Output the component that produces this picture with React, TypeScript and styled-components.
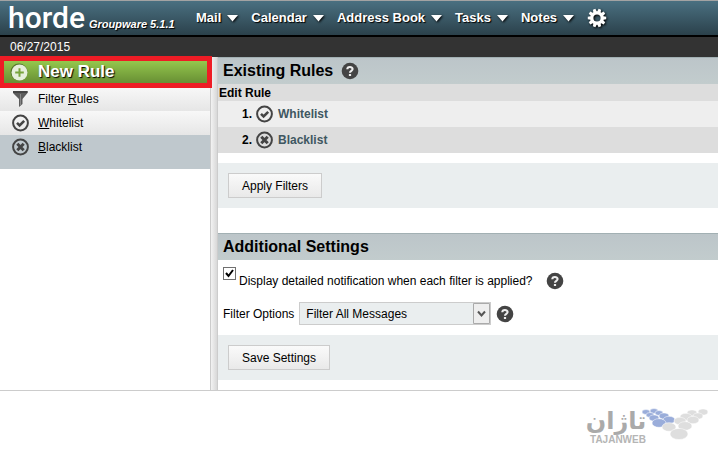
import React from "react";
import styled, { createGlobalStyle } from "styled-components";

const Global = createGlobalStyle`
  * { box-sizing: border-box; }
  body { margin: 0; background: #fff; color: #000; font: 12px/16px "Liberation Sans", Arial, sans-serif; }
  button, select, input { font: inherit; color: inherit; margin: 0; }
`;

const TopBar = styled.header`
  display: flex;
  align-items: center;
  height: 37px;
  border-top: 1px solid #a3a3a3;
  border-bottom: 2px solid #000;
  background: linear-gradient(#4a7081, #2b414b);
  color: #fff;
  text-shadow: 1px 1px 1px #000;
`;

const Brand = styled.div`
  display: flex;
  align-items: baseline;
  width: 196px;
  padding-left: 8px;
  flex: none;
`;

const BrandName = styled.span`
  width: 81px;
  font: 500 30px/34px Roboto, sans-serif;
  text-shadow: none;
`;

const BrandVersion = styled.span`
  font-size: 11px;
  font-weight: bold;
  font-style: italic;
  white-space: nowrap;
`;

const Nav = styled.nav`
  display: flex;
  align-items: center;
  gap: 13px;
`;

const NavItem = styled.button`
  display: flex;
  align-items: center;
  gap: 6px;
  padding: 0;
  border: 0;
  background: none;
  font-size: 13px;
  font-weight: bold;
  text-shadow: inherit;
  white-space: nowrap;
  svg { filter: drop-shadow(1px 1px 1px #000); }
`;

const DateBar = styled.div`
  height: 20px;
  padding: 2px 10px;
  background: #333;
  color: #fff;
`;

const Page = styled.div`
  display: flex;
  border-bottom: 1px solid #ccc;
`;

const Sidebar = styled.aside`
  width: 211px;
  flex: none;
  border-right: 1px solid #ccc;
`;

const NewRule = styled.button`
  display: flex;
  align-items: center;
  gap: 10px;
  width: 212px;
  height: 32px;
  margin: -1px 0;
  padding: 0 6px;
  border: 5px solid #ee1c25;
  border-left-width: 4px;
  background: linear-gradient(#94c74d, #688f34) padding-box;
  color: #fff;
  font-size: 17px;
  line-height: 20px;
  font-weight: bold;
  text-shadow: 1px 1px 1px #000;
  position: relative;
`;

const FilterLink = styled.a<{ $active?: boolean }>`
  display: flex;
  align-items: center;
  gap: 8px;
  height: ${(p) => (p.$active ? 34 : 24)}px;
  padding: 0 0 ${(p) => (p.$active ? 10 : 0)}px 12px;
  background: ${(p) => (p.$active ? "#bfc8cd" : "linear-gradient(#f8f8f8, #e6e6e6)")};
  color: #000;
  text-decoration: none;
`;

const Splitter = styled.div`
  width: 7px;
  flex: none;
  border-right: 1px solid #ccc;
  background: linear-gradient(90deg, #f2f2f2, #d8d8d8);
`;

const Main = styled.main`
  flex: 1;
  min-width: 0;
  padding-bottom: 10px;
`;

const Heading = styled.h1`
  display: flex;
  align-items: center;
  gap: 8px;
  height: 27px;
  margin: 0;
  padding: 0 5px;
  border-top: 1px solid #a2b0b3;
  background: linear-gradient(#bcc5c9, #c2cccd);
  font-size: 16px;
  line-height: 20px;
`;

const RuleTable = styled.table`
  width: 100%;
  border-collapse: collapse;
  th, td { padding: 0; text-align: left; font-weight: bold; }
  th { height: 17px; padding-left: 1px; background: #ddd; }
  td { height: 26px; }
  tbody tr { background: #eee; }
  tbody tr:nth-child(even) { background: #ddd; }
`;

const Rule = styled.div`
  display: flex;
  align-items: center;
  gap: 4px;
  padding-left: 24px;
  a { color: #3f5761; text-decoration: none; }
`;

const Actions = styled.div`
  padding: 10px;
  margin-top: 10px;
  background: #eaeeef;
`;

const ActionButton = styled.button`
  display: block;
  height: 25px;
  padding: 0 13px;
  border: 1px solid #ccc;
  background: linear-gradient(#fafafa, #e9e9e9);
`;

const Gap = styled.div`
  height: 25px;
`;

const CheckRow = styled.div`
  display: flex;
  align-items: center;
  gap: 3px;
  height: 28px;
  margin: 7px 0;
  padding: 0 5px;
  label { padding-right: 10px; }
`;

const Checkbox = styled.input`
  appearance: none;
  width: 13px;
  height: 13px;
  margin: 0;
  border: 1px solid #707070;
  align-self: flex-start;
  background: #fff;
  &:checked {
    background: url("data:image/svg+xml,%3Csvg xmlns='http://www.w3.org/2000/svg' viewBox='0 0 11 11'%3E%3Cpath d='M2 5l2.5 3L9 2' fill='none' stroke='%23000' stroke-width='2'/%3E%3C/svg%3E");
  }
`;

const SelectRow = styled.div`
  display: flex;
  align-items: center;
  gap: 5px;
  padding: 0 5px;
`;

const SelectBox = styled.div`
  display: grid;
  align-items: center;
  width: 192px;
  select, svg { grid-area: 1 / 1; }
  svg { justify-self: end; pointer-events: none; }
`;

const Select = styled.select`
  appearance: none;
  width: 100%;
  height: 23px;
  padding: 0 24px 0 6px;
  border: 1px solid #ccc;
  border-radius: 0;
  background: #eaeeef;
`;

const Footer = styled.footer`
  display: flex;
  justify-content: flex-end;
  padding: 13px 9px 0 0;
`;

const Watermark = styled.svg`
  display: block;
  width: 124px;
  height: 44px;
`;

const Arrow = () => (
  <svg width="11" height="7" viewBox="0 0 11 7"><path d="M0 0h11L5.500 6.500z" fill="#fff" /></svg>
);

const Gear = () => (
  <svg width="20" height="20" viewBox="-10 -10 20 20" aria-hidden="true">
    {[0, 36, 72, 108, 144, 180, 216, 252, 288, 324].map((a) => (
      <path key={a} d="M-1.300 -9.200H1.300L2 -5H-2z" fill="#fff" transform={`rotate(${a + 18})`} />
    ))}
    <circle r="5.200" fill="none" stroke="#fff" strokeWidth="3.200" />
  </svg>
);

const Plus = () => (
  <svg width="18" height="18" viewBox="0 0 18 18" aria-hidden="true">
    <circle cx="9" cy="9" r="8.500" fill="#54762a" />
    <circle cx="9.500" cy="9.500" r="8" fill="#e6efdc" />
    <path d="M9.500 5.200v8.600M5.200 9.500h8.600" stroke="#78a43d" strokeWidth="2" />
  </svg>
);

const Funnel = () => (
  <svg width="18" height="18" viewBox="0 0 18 18" aria-hidden="true">
    <path d="M1 1h14.500v2L10.500 9v5L7 17V9L1 3z" fill="#5c5c5c" />
    <path d="M1 1h14.500v2H1z" fill="#444" />
    <path d="M8.500 4v11" stroke="#888" />
  </svg>
);

const Ring = ({ kind }: { kind: "check" | "cross" }) => (
  <svg width="18" height="18" viewBox="0 0 18 18" aria-hidden="true">
    <circle cx="8.500" cy="9" r="7.400" fill="none" stroke="#444" strokeWidth="2" />
    {kind === "check" ? (
      <path d="M5 8.800l2.600 2.600 4.600-4.600" fill="none" stroke="#444" strokeWidth="2.600" />
    ) : (
      <path d="M5.300 5.800l6.400 6.400M11.700 5.800l-6.400 6.400" stroke="#444" strokeWidth="3" />
    )}
  </svg>
);

const Help = () => (
  <svg width="18" height="18" viewBox="0 0 18 18" role="img" aria-label="Help">
    <circle cx="9" cy="9" r="8.300" fill="#444" />
    <path d="M6.300 7.300C6.300 4.300 11.600 4.300 11.600 7.100c0 1.800-2.600 1.700-2.600 3.700" fill="none" stroke="#eee" strokeWidth="2.100" />
    <path d="M7.900 12h2.200v2H7.900z" fill="#eee" />
  </svg>
);

const BLUE = "#9aadda";
const GREY = "#dedede";
const dots: [number, number, number, string][] = [
  [61, 8, 4, BLUE], [69, 7, 4, BLUE], [65, 11, 4, BLUE], [74, 9, 4, BLUE],
  [69, 14, 5, BLUE], [79, 12, 5, BLUE], [84, 16, 6, BLUE], [74, 19, 7, BLUE],
  [118, 8, 5, GREY], [107, 9, 5, GREY], [113, 12, 5, GREY], [101, 13, 6, GREY],
  [108, 16, 6, GREY], [95, 17, 6, GREY], [100, 22, 7, GREY], [84, 23, 7, GREY], [94, 30, 9, GREY],
];

const menus = ["Mail", "Calendar", "Address Book", "Tasks", "Notes"];

export default function App() {
  return (
    <>
      <Global />
      <TopBar>
        <Brand>
          <BrandName>horde</BrandName>
          <BrandVersion>Groupware 5.1.1</BrandVersion>
        </Brand>
        <Nav>
          {menus.map((m) => <NavItem key={m}>{m}<Arrow /></NavItem>)}
          <NavItem aria-label="Settings"><Gear /></NavItem>
        </Nav>
      </TopBar>
      <DateBar>06/27/2015</DateBar>
      <Page>
        <Sidebar>
          <NewRule><Plus />New Rule</NewRule>
          <FilterLink href="#filters"><Funnel /><span>Filter <u>R</u>ules</span></FilterLink>
          <FilterLink href="#whitelist"><Ring kind="check" /><span><u>W</u>hitelist</span></FilterLink>
          <FilterLink href="#blacklist" $active><Ring kind="cross" /><span><u>B</u>lacklist</span></FilterLink>
        </Sidebar>
        <Splitter />
        <Main>
          <Heading>Existing Rules <Help /></Heading>
          <RuleTable>
            <thead><tr><th>Edit Rule</th></tr></thead>
            <tbody>
              <tr><td><Rule>1. <Ring kind="check" /><a href="#whitelist">Whitelist</a></Rule></td></tr>
              <tr><td><Rule>2. <Ring kind="cross" /><a href="#blacklist">Blacklist</a></Rule></td></tr>
            </tbody>
          </RuleTable>
          <Actions><ActionButton>Apply Filters</ActionButton></Actions>
          <Gap />
          <Heading as="h2">Additional Settings</Heading>
          <CheckRow>
            <Checkbox type="checkbox" id="notify" defaultChecked />
            <label htmlFor="notify">Display detailed notification when each filter is applied?</label>
            <Help />
          </CheckRow>
          <SelectRow>
            <label htmlFor="options">Filter Options</label>
            <SelectBox>
              <Select id="options"><option>Filter All Messages</option></Select>
              <svg width="18" height="23" viewBox="0 0 18 23" aria-hidden="true">
                <path d="M.5 1.500h16v20H.5z" fill="#eee" stroke="#aaa" />
                <path d="M5 9.500l3.500 4 3.500-4" fill="none" stroke="#555" strokeWidth="2" />
              </svg>
            </SelectBox>
            <Help />
          </SelectRow>
          <Actions><ActionButton>Save Settings</ActionButton></Actions>
        </Main>
      </Page>
      <Footer>
        <Watermark viewBox="0 0 124 44" role="img" aria-label="تاژان TAJANWEB">
          <text x="31" y="25" textAnchor="middle" fontFamily="DejaVu Sans, sans-serif" fontWeight="bold" fontSize="24" fill="#aaa">تاژان</text>
          <text x="33" y="39" textAnchor="middle" fontFamily="Liberation Sans, sans-serif" fontWeight="bold" fontSize="10" fill="#b5b5b5">TAJANWEB</text>
          {dots.map(([x, y, r, c]) => <ellipse key={`${x}-${y}`} cx={x} cy={y} rx={r} ry={r * 0.62} fill={c} stroke="#fff" strokeWidth="0.500" />)}
        </Watermark>
      </Footer>
    </>
  );
}
